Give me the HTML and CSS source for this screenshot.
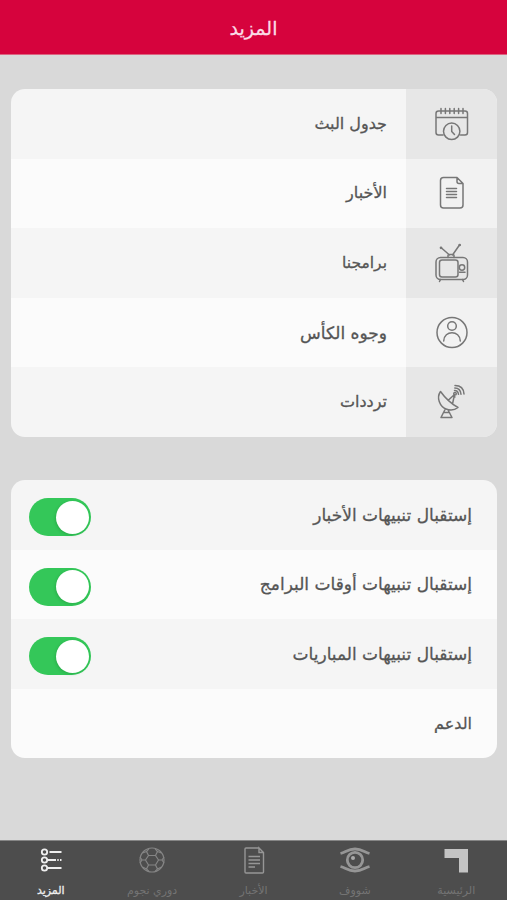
FILE: index.html
```html
<!DOCTYPE html>
<html lang="ar" dir="rtl">
<head>
<meta charset="utf-8">
<title>المزيد</title>
<link rel="stylesheet" href="styles.css">
</head>
<body>
<div class="app">
  <header class="header"><h1>المزيد</h1></header>
  <main class="content">
    <ul class="card">
      <li class="row">
        <span class="tile"><svg viewBox="0 0 36 36"><path d="M9 29H4.500Q2 29 2 26.500V7.500Q2 5 4.500 5H31Q33.500 5 33.500 7.500V26.500Q33.500 29 31 29H26.500M2 11.500H33.500M7 2.500V7.500M11.400 2.500V7.500M15.800 2.500V7.500M20.200 2.500V7.500M24.600 2.500V7.500M29 2.500V7.500"/><circle cx="17.700" cy="25.300" r="8.200"/><path d="M17.700 20V25.500L20.500 28.500"/></svg></span>
        <span class="label short">جدول البث</span>
      </li>
      <li class="row">
        <span class="tile"><svg viewBox="0 0 36 36"><path d="M23 2.500H9.500Q6.500 2.500 6.500 5.500V30Q6.500 33 9.500 33H26Q29 33 29 30V8.500L23 2.500V6.500Q23 8.500 25 8.500H29M12.500 13.500H22.500M12.500 16.500H22.500M12.500 19.500H22.500M12.500 22.500H22.500"/></svg></span>
        <span class="label short">الأخبار</span>
      </li>
      <li class="row">
        <span class="tile"><svg class="tv" viewBox="0 0 36 42"><path d="M7.500 6L15.500 13M25.500 3L18.500 13M14 15.500V13.500Q14 12.500 15 12.500H19Q20 12.500 20 13.500V15.500M6.500 37.500L5.500 39.500M28.500 37.500L29.500 39.500"/><rect x="2" y="15.500" width="31.500" height="22" rx="4.500"/><rect x="5.500" y="18" width="18.500" height="17" rx="2.500"/><circle cx="28" cy="25.500" r="2.700"/><path d="M25.500 30.200H31"/><circle cx="7" cy="5.800" r=".6"/><circle cx="25.700" cy="3" r=".6"/></svg></span>
        <span class="label narrow">برامجنا</span>
      </li>
      <li class="row">
        <span class="tile"><svg viewBox="0 0 36 36"><circle cx="18" cy="17.500" r="15"/><circle cx="18" cy="11" r="4.300"/><path d="M9.700 26C10 15 26 15 26.300 26"/></svg></span>
        <span class="label">وجوه الكأس</span>
      </li>
      <li class="row">
        <span class="tile"><svg class="dish" viewBox="0 0 36 40"><path d="M6.500 9.500C2 16 6 24.500 12 27C17 29 21.500 27.500 24 25.500Q14 20 6.500 9.500ZM14.500 18L20.500 12.500L18.500 22M10.800 28L7 35.500H18L14.300 28.500M9.500 30.500H15.500M19 14L21 15"/><circle cx="21" cy="11.800" r="1.300"/><path d="M20.500 8.500Q24 8.500 24.500 12.300M20.800 6Q26.500 6 27 12.300M21 3.500Q29.500 3.500 30 12"/></svg></span>
        <span class="label short">ترددات</span>
      </li>
    </ul>
    <ul class="card settings">
      <li class="row"><span class="label">إستقبال تنبيهات الأخبار</span><span class="switch" role="switch" aria-checked="true"></span></li>
      <li class="row"><span class="label">إستقبال تنبيهات أوقات البرامج</span><span class="switch" role="switch" aria-checked="true"></span></li>
      <li class="row"><span class="label">إستقبال تنبيهات المباريات</span><span class="switch" role="switch" aria-checked="true"></span></li>
      <li class="row"><span class="label short">الدعم</span></li>
    </ul>
  </main>
  <nav class="tabs">
    <a class="tab home"><svg viewBox="0 0 32 30"><path d="M4.500 4H28V27.500H19V13H4.500Z"/></svg><span>الرئيسية</span></a>
    <a class="tab eye"><svg viewBox="0 0 32 30"><path class="thick" d="M1.500 8.500C7 7 9 4 16 4S25 7 30.500 8.500M1.500 21.500C7 23 9 26 16 26S25 23 30.500 21.500"/><circle class="thick" cx="16" cy="15" r="7.700"/><circle class="dot" cx="14" cy="13" r="2"/></svg><span>شووف</span></a>
    <a class="tab"><svg viewBox="0 0 32 30"><path d="M21 3H8Q7 3 7 4V27Q7 28 8 28H24.500Q25.500 28 25.500 27V7.500L21 3V7.500H25.500M10.500 11.500H22M10.500 15H22M10.500 18.500H22M10.500 22H17"/></svg><span>الأخبار</span></a>
    <a class="tab ball"><svg viewBox="0 0 32 30"><circle cx="16" cy="15" r="12"/><path d="M12.500 10.500H19.500L22.500 15L19.500 20H12.500L9.500 15ZM12.500 10.500L10.500 6.500L13 3.500M19.500 10.500L21.500 6.500L19 3.500M22.500 15H26L28 12M26 15L28 18M19.500 20L21.500 24L19 26.500M12.500 20L10.500 24L13 26.500M9.500 15H6L4 12M6 15L4 18M10.500 6.500L6.500 8M21.500 6.500L25.500 8M21.500 24L25.500 22M10.500 24L6.500 22"/></svg><span>دوري نجوم</span></a>
    <a class="tab active"><svg viewBox="0 0 32 30"><circle cx="9.500" cy="7" r="2.700"/><circle cx="9.500" cy="15" r="2.700"/><circle cx="9.500" cy="23" r="2.700"/><path d="M14.500 7H26.500M12.500 15H21M22.300 15H23.700M25 15H26.500M12.500 23H26.500"/></svg><span>المزيد</span></a>
  </nav>
</div>
</body>
</html>
```
FILE: styles.css
```css
* { box-sizing: border-box; }
body { margin: 0; background: #d9d9d9; font-family: "DejaVu Sans", sans-serif; color: #555; }
.app { width: 507px; height: 900px; display: flex; flex-direction: column; overflow: hidden; }
.header { height: 55px; flex: none; display: flex; align-items: center; justify-content: center; background: #d6033d; border-bottom: 1px solid #dc6380; }
.header h1 { margin: 2px 0 0; font-size: 19px; font-weight: 400; color: #fbdce5; -webkit-text-stroke: 0.3px #fbdce5; }
.content { flex: 1; padding: 34px 10px 0 11px; }
.card { list-style: none; margin: 0 0 43px; padding: 0; border-radius: 14px; overflow: hidden; }
.row { height: 69.6px; display: flex; align-items: center; background: #fbfbfb; }
.row:nth-child(odd) { background: #f5f5f5; }
.tile { width: 91px; align-self: stretch; display: flex; align-items: center; justify-content: center; background: #f2f2f2; }
.row:nth-child(odd) .tile { background: #e7e7e7; }
.tile svg { width: 36px; height: 36px; fill: none; stroke: #777; stroke-width: 1.5; stroke-linecap: round; stroke-linejoin: round; }
.tile .tv { height: 42px; }
.tile .dish { height: 40px; }
.label { font-size: 17px; line-height: 24px; margin-right: 19px; white-space: nowrap; -webkit-text-stroke: 0.3px #555; }
.label.short { font-size: 16px; }
.label.narrow { font-size: 15.500px; }
.settings .row { padding: 0 25px 0 18px; justify-content: space-between; }
.settings .label { margin: 0; }
.switch { width: 62px; height: 38px; padding: 2px; margin-top: 5px; border-radius: 19px; background: #34c759; display: flex; justify-content: flex-end; align-items: center; direction: ltr; }
.switch::before { content: ""; width: 33px; height: 33px; border-radius: 50%; background: #fff; box-shadow: -1px 1px 3px #16803055; }
.tabs { height: 60px; flex: none; display: grid; grid-template-columns: repeat(5, 1fr); background: #4d4d4d; border-top: 1px solid #858585; }
.tab { display: flex; flex-direction: column; align-items: center; padding-top: 4px; color: #747474; font-size: 11px; line-height: 16px; }
.tab svg { width: 32px; height: 30px; flex: none; fill: none; stroke: #969696; stroke-width: 1.4; }
.tab span { margin-top: 8px; white-space: nowrap; }
.home svg { fill: #c4c4c4; stroke: none; }
.eye .thick { stroke-width: 2.8; }
.eye .dot { fill: #aaa; stroke: none; }
.ball svg { stroke: #858585; stroke-width: 1.2; }
.active { color: #eee; -webkit-text-stroke: 0.3px #eee; }
.active svg { stroke: #eee; stroke-width: 1.8; }
```
